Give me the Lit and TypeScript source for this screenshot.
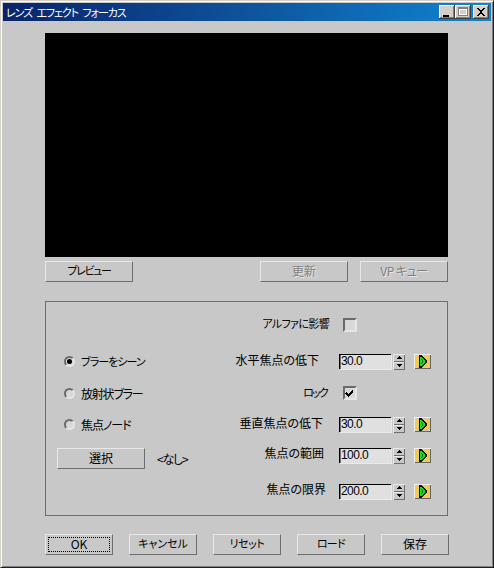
import { LitElement, html, css, svg } from "lit";
import { customElement } from "lit/decorators.js";

const arrow = html`<svg class="key" width="17" height="15" viewBox="0 0 17 15" shape-rendering="crispEdges">
  <rect x="0" y="0" width="17" height="15" fill="#eeeeee"/>
  <rect x="1" y="1" width="16" height="14" fill="#666666"/>
  <rect x="1" y="1" width="15" height="13" fill="#c8c8c8"/>
  <rect x="2" y="2" width="13" height="11" fill="#f5c85a"/>
  <path d="M5 1h3v1h1v1h1v1h1v1h1v1h1v3h-1v1h-1v1h-1v1h-1v1h-1v1h-3z" fill="#111"/>
  <path d="M6 3h2v1h1v1h1v1h1v3h-1v1h-1v1h-1v1h-2z" fill="#12e02c"/>
  <path d="M7 5h1v1h1v3h-1v1h-1v-1h1v-3h-1z" fill="#0a7a1c"/>
</svg>`;

const spinUp = svg`<path d="M6 3h1v1h1v1h1v1h-5v-1h1v-1h1z" fill="#000"/>`;

@customElement("app-root")
export class AppRoot extends LitElement {
  static styles = css`
    :host {
      display: block;
      width: 494px;
      height: 568px;
      font-family: "Noto Sans CJK JP", "Liberation Sans", sans-serif;
      font-size: 12px;
      font-feature-settings: "palt";
      color: #000;
    }
    * { box-sizing: border-box; }
    .window {
      width: 494px;
      height: 568px;
      background: #c8c8c8;
      border-style: solid;
      border-width: 1px;
      border-color: #d4d0c8 #202020 #202020 #d4d0c8;
      box-shadow: inset 1px 1px 0 #fff, inset -1px -1px 0 #808080;
      padding: 2px;
      display: flex;
      flex-direction: column;
    }
    .titlebar {
      height: 18px;
      flex: none;
      display: flex;
      align-items: center;
      justify-content: space-between;
      padding: 0 2px 0 3px;
      background: linear-gradient(90deg, #0a246a, #1084d0);
      color: #fff;
      line-height: 18px;
    }
    .caption {
      font-size: 11px;
      letter-spacing: -1.1px;
      word-spacing: 3px;
      white-space: pre;
    }
    .wbtns { display: flex; }
    .wbtn { display: block; }
    .wbtn.close { margin-left: 2px; }
    .body {
      flex: 1;
      display: flex;
      flex-direction: column;
      padding: 12px 0 0 42px;
    }
    .preview { width: 403px; height: 224px; background: #000; flex: none; }
    .btn {
      display: flex;
      align-items: center;
      justify-content: center;
      height: 21px;
      border: 1px solid;
      border-color: #e8e8e8 #6e6e6e #6e6e6e #e8e8e8;
      background: #c8c8c8;
      white-space: nowrap;
      line-height: 1;
      padding-bottom: 2px;
      flex: none;
    }
    .w88 { width: 88px; }
    .w68 { width: 68px; }
    .disabled { color: #808080; text-shadow: 1px 1px 0 #e6e6e6; }
    .toprow { display: flex; margin-top: 4px; width: 403px; }
    .spacer { flex: 1; }
    .gap12 { margin-left: 12px; }
    .group {
      margin-top: 19px;
      width: 403px;
      height: 215px;
      border: 1px solid #6e6e6e;
      display: flex;
      padding: 15px 0 0 11px;
    }
    .left {
      width: 143px;
      flex: none;
      padding-top: 37px;
      display: grid;
      grid-template-rows: 32px 31px 31px 21px;
      align-content: start;
    }
    .radio {
      display: flex;
      align-items: center;
      height: 15px;
      padding-left: 7px;
      white-space: nowrap;
    }
    .radio .txt { margin-top: -1px; }
    .radio .dot {
      width: 11px;
      height: 11px;
      border-radius: 50%;
      border: 2px solid;
      border-color: #6a6a6a #e4e4e4 #e4e4e4 #6a6a6a;
      background: #d8d8d8;
      margin-right: 6px;
      display: flex;
      align-items: center;
      justify-content: center;
      flex: none;
    }
    .radio .dot.on::after {
      content: "";
      width: 5px;
      height: 5px;
      border-radius: 50%;
      background: #000;
    }
    .selrow { display: flex; align-items: center; white-space: nowrap; }
    .none { margin-left: 12px; }
    .right {
      flex: 1;
      min-width: 0;
      display: grid;
      grid-template-rows: 37px 31px 32px 31px 36px 16px;
      align-content: start;
    }
    .row { display: flex; align-items: flex-start; height: 16px; }
    .label {
      width: 136px;
      text-align: right;
      white-space: nowrap;
      line-height: 14px;
      margin-top: -1px;
      flex: none;
    }
    .label.high { margin-top: -2px; }
    .label.low { margin-top: 0; }
    .check {
      margin-left: 7px;
      margin-top: 1px;
      width: 14px;
      height: 14px;
      border: 2px solid;
      border-color: #6a6a6a #e6e6e6 #e6e6e6 #6a6a6a;
      background: #d8d8d8;
      flex: none;
      display: flex;
    }
    .field {
      margin-left: 3px;
      width: 52px;
      height: 15px;
      background: #e0e0e0;
      border-style: solid;
      border-width: 1px 0 0 1px;
      border-color: #000;
      box-shadow: inset 1px 0 0 #707070, 1px 1px 0 #eaeaea;
      font-size: 12px;
      line-height: 13px;
      padding-left: 1px;
      letter-spacing: -0.6px;
      flex: none;
      font-family: "Liberation Sans", sans-serif;
      overflow: hidden;
    }
    .spin { margin-left: 2px; flex: none; display: block; }
    .key { margin-left: 9px; flex: none; display: block; }
    .bottom {
      margin-top: 18px;
      display: flex;
      gap: 16px;
    }
    .ok { position: relative; }
    .ok::after {
      content: "";
      position: absolute;
      inset: 2px;
      border: 1px dotted #000;
    }
    .ls05 { letter-spacing: -0.5px; }
    .ls10 { letter-spacing: -1px; }
    .ls12 { letter-spacing: -1.2px; }
    .k00 { font-size: 11px; }
    .k04 { font-size: 11px; letter-spacing: -0.4px; }
    .k065 { font-size: 11px; letter-spacing: -0.65px; }
    .k07 { font-size: 11px; letter-spacing: -0.7px; }
    .k095 { font-size: 11px; letter-spacing: -0.95px; }
    .k14 { font-size: 11px; letter-spacing: -1.4px; }
    .k18 { font-size: 11px; letter-spacing: -1.8px; }
  `;

  private spinner() {
    return html`<svg class="spin" width="12" height="16" viewBox="0 0 12 16" shape-rendering="crispEdges">
      <rect width="12" height="16" fill="#e8e8e8"/>
      <rect x="1" y="1" width="11" height="15" fill="#6e6e6e"/>
      <rect x="1" y="1" width="10" height="14" fill="#c8c8c8"/>
      <rect x="1" y="7" width="10" height="1" fill="#6e6e6e"/>
      <rect x="1" y="8" width="10" height="1" fill="#e8e8e8"/>
      <g transform="translate(0,-1)">${spinUp}</g>
      <path d="M4 10h5v1h-1v1h-1v1h-1v-1h-1v-1h-1z" fill="#000"/>
    </svg>`;
  }

  private field(label: string, value: string, pad: number, cls = "") {
    return html`<div class="row">
      <span class="label ${cls}" style="padding-right:${pad}px">${label}</span>
      <span class="field">${value}</span>
      ${this.spinner()}
      ${arrow}
    </div>`;
  }

  render() {
    return html`<div class="window">
      <div class="titlebar">
        <span class="caption">レンズ エフェクト フォーカス</span>
        <div class="wbtns">
          ${this.wbtn("min")}${this.wbtn("max")}${this.wbtn("close")}
        </div>
      </div>
      <div class="body">
        <div class="preview"></div>
        <div class="toprow">
          <div class="btn w88 k14">プレビュー</div>
          <div class="spacer"></div>
          <div class="btn w88 disabled">更新</div>
          <div class="btn w88 disabled gap12 ls05">VP キュー</div>
        </div>
        <div class="group">
          <div class="left">
            <div class="radio"><span class="dot on"></span><span class="txt k095">ブラーをシーン</span></div>
            <div class="radio"><span class="dot"></span><span class="txt ls12">放射状ブラー</span></div>
            <div class="radio"><span class="dot"></span><span class="txt ls10">焦点ノード</span></div>
            <div class="selrow">
              <div class="btn w88">選択</div>
              <span class="none ls12">&lt;なし&gt;</span>
            </div>
          </div>
          <div class="right">
            <div class="row">
              <span class="label k065" style="padding-right:7px">アルファに影響</span>
              <span class="check"></span>
            </div>
            ${this.field("水平焦点の低下", "30.0", 17)}
            <div class="row">
              <span class="label low k18" style="padding-right:9px">ロック</span>
              <span class="check">
                <svg width="10" height="10" viewBox="0 0 10 10" shape-rendering="crispEdges">
                  <path d="M1 4h1v1h1v1h1v-1h1v-1h1v-1h1v-1h1v3h-1v1h-1v1h-1v1h-1v1h-1v-1h-1v-1h-1v-1h-1z" fill="#000"/>
                </svg>
              </span>
            </div>
            ${this.field("垂直焦点の低下", "30.0", 13)}
            ${this.field("焦点の範囲", "100.0", 12, "high")}
            ${this.field("焦点の限界", "200.0", 10, "high")}
          </div>
        </div>
        <div class="bottom">
          <div class="btn w68 ok">OK</div>
          <div class="btn w68 k00">キャンセル</div>
          <div class="btn w68 k04">リセット</div>
          <div class="btn w68 k07">ロード</div>
          <div class="btn w68">保存</div>
        </div>
      </div>
    </div>`;
  }

  private wbtn(kind: "min" | "max" | "close") {
    const glyph =
      kind === "min"
        ? svg`<rect x="4" y="10" width="6" height="2" fill="#000"/>`
        : kind === "max"
        ? svg`<rect x="3" y="2" width="10" height="9" fill="#808080"/><rect x="4" y="4" width="8" height="6" fill="#fff"/><rect x="5" y="5" width="6" height="4" fill="#d4d0c8"/>`
        : svg`<path d="M4 3h2v1h1v1h2v-1h1v-1h2v1h-1v1h-1v1h-1v2h1v1h1v1h1v1h-2v-1h-1v-1h-2v1h-1v1h-2v-1h1v-1h1v-1h1v-2h-1v-1h-1v-1h-1z" fill="#000"/>`;
    return html`<svg class="wbtn ${kind}" width="16" height="14" viewBox="0 0 16 14" shape-rendering="crispEdges">
      <rect width="16" height="14" fill="#404040"/>
      <rect width="15" height="13" fill="#fff"/>
      <rect x="1" y="1" width="14" height="12" fill="#808080"/>
      <rect x="1" y="1" width="13" height="11" fill="#d4d0c8"/>
      ${glyph}
    </svg>`;
  }
}
